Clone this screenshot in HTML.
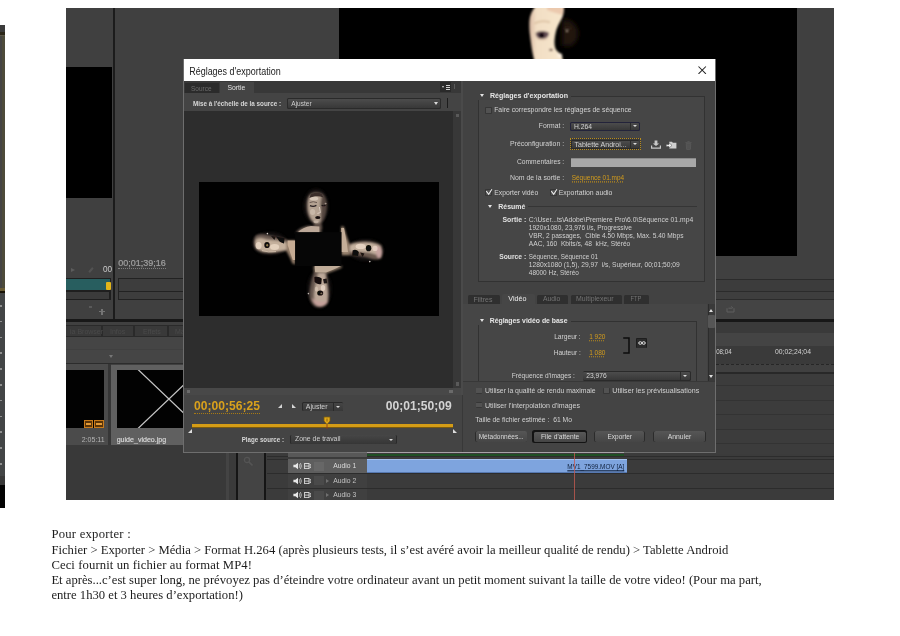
<!DOCTYPE html>
<html lang="fr">
<head>
<meta charset="utf-8">
<title>Réglages d'exportation</title>
<style>
html,body{margin:0;padding:0;background:#fff;}
body{width:900px;height:636px;position:relative;overflow:hidden;font-family:"Liberation Sans",sans-serif;}
.a{position:absolute;}
.t{position:absolute;white-space:nowrap;line-height:1;font-size:7px;color:#c8c8c8;}
#shot{position:absolute;left:0;top:0;width:900px;height:636px;background:#404040;clip-path:inset(8px 66px 136px 66px);filter:blur(0.35px);}
.cap{position:absolute;left:51.4px;font-family:"Liberation Serif",serif;font-size:12.66px;line-height:1;color:#1c1c1c;white-space:nowrap;}
</style>
</head>
<body>

<!-- left strip of neighbouring page -->
<div class="a" style="left:0;top:25px;width:5px;height:7px;background:#3b3b3b;"></div>
<div class="a" style="left:0;top:32px;width:5px;height:2.5px;background:#2b2618;"></div>
<div class="a" style="left:0;top:34.5px;width:5px;height:1.5px;background:#5c5848;"></div>
<div class="a" style="left:0;top:36px;width:2px;height:252px;background:#454443;"></div>
<div class="a" style="left:2px;top:36px;width:3px;height:252px;background:#4d4b3a;"></div>
<div class="a" style="left:0;top:288px;width:5px;height:3px;background:#6a5c34;"></div>
<div class="a" style="left:0;top:291px;width:5px;height:1.7px;background:#181206;"></div>
<div class="a" style="left:0;top:292.7px;width:5px;height:183px;background:#434546;"></div>
<div class="a" style="left:0;top:305px;width:2px;height:168px;background:repeating-linear-gradient(to bottom,#8e8e8e 0,#8e8e8e 1.6px,transparent 1.6px,transparent 15.8px);"></div>
<div class="a" style="left:0;top:475.7px;width:5px;height:9px;background:#393939;"></div>
<div class="a" style="left:0;top:484.7px;width:5px;height:23.8px;background:#030303;"></div>

<!-- screenshot -->
<div id="shot">

<!-- ===== background app (page coords) ===== -->
<!-- source monitor black -->
<div class="a" style="left:66px;top:67px;width:46px;height:131px;background:#000;"></div>
<div class="a" style="left:113px;top:8px;width:2px;height:312px;background:#1c1c1c;"></div>
<!-- program monitor -->
<div class="a" style="left:339px;top:8px;width:458px;height:248px;background:#000;"></div>
<svg class="a" style="left:500px;top:8px" width="120" height="51" viewBox="500 8 120 51">
<defs>
<filter id="fb1" x="-20%" y="-20%" width="140%" height="140%"><feGaussianBlur stdDeviation="0.8"/></filter>
<filter id="fb2" x="-30%" y="-30%" width="160%" height="160%"><feGaussianBlur stdDeviation="2.4"/></filter>
<linearGradient id="fg" x1="0" y1="0" x2="1" y2="0"><stop offset="0" stop-color="#d8b8a2"/><stop offset="0.2" stop-color="#f2dec4"/><stop offset="1" stop-color="#f6e6cc"/></linearGradient>
</defs>
<g filter="url(#fb2)">
<path d="M562 20 C570 18 577 24 578 32 C578.6 38 576 43 571 46 L562 46 Z" fill="#24150f"/>
</g>
<g filter="url(#fb1)">
<path d="M536.4 5 C532.4 10 529.6 15.6 529.4 21.2 C529.2 26 529.4 30.6 529.9 34.6 C530.4 39 531 43 531.6 47.2 C532.2 51.4 533.2 56 534.6 62 L563.2 62 L562.2 56.6 C561 53.6 558 52 556.2 50 C554.8 47.6 554.4 44.6 554.5 40.8 C554.7 37.6 555.2 34.6 555.8 31.9 C556.6 28.6 558 25.6 559.4 22.9 C561 20 562.6 17.6 563.2 14.6 C563.8 11.6 564 8 563.8 5 Z" fill="url(#fg)"/>
<path d="M547 6 L563.8 6 C564 9 563.6 12 563 15 C558 13.6 552 12 547 10 Z" fill="#e8c2a6" opacity=".8"/>
<path d="M534.6 23.4 Q541 19.8 550 22.2" stroke="#d8bc9c" stroke-width="1.7" fill="none"/>
<path d="M535.6 35 C537 32.4 541 31 545 32 C547 32.6 548.4 33.6 548.8 35 C548 37.6 545 39 541.6 39 C538.6 38.8 536.4 37.4 535.6 35 Z" fill="#6a525a"/>
<path d="M535.8 33.6 Q541.6 29.6 548.8 33.4" stroke="#4a343c" stroke-width="1.3" fill="none"/>
<ellipse cx="541.6" cy="35.2" rx="2.9" ry="2.5" fill="#0e0608"/>
<path d="M536.4 38.6 Q541.4 41.4 547.6 38.4" stroke="#e2c8ae" stroke-width="1.1" fill="none"/>
<ellipse cx="551" cy="49.9" rx="1.7" ry="1.2" fill="#5a3a30"/>
<ellipse cx="559.6" cy="55.4" rx="2.6" ry="2.2" fill="#fbeede"/>
<circle cx="567" cy="31" r="1.1" fill="#d8cab8"/>
<path d="M563.4 28.6 Q567.6 26.6 572 29" stroke="#3a2822" stroke-width="1.1" fill="none"/>
</g>
</svg>
<!-- left transport -->
<div class="t" style="left:102.9px;top:266.2px;font-size:8.2px;color:#cacaca;transform:scaleY(1.12);">00</div>
<div class="t" style="left:118.3px;top:259.10px;font-size:8.99px;color:#a0a0a0;-webkit-text-stroke:0.2px #a0a0a0;border-bottom:1px dotted #808080;padding-bottom:0.3px;">00;01;39;16</div>
<div class="a" style="left:71px;top:268px;width:0;height:0;border-left:4px solid #5c5c5c;border-top:2.5px solid transparent;border-bottom:2.5px solid transparent;"></div>
<div class="a" style="left:88px;top:267px;width:6px;height:6px;border-radius:1px;background:#525252;transform:rotate(40deg) scaleX(.35);"></div>
<div class="a" style="left:66px;top:278px;width:45px;height:22px;background:#1f1f1f;"></div>
<div class="a" style="left:66px;top:279px;width:44px;height:11px;background:#285e5f;"></div>
<div class="a" style="left:106px;top:282px;width:5px;height:8px;background:#e2b619;border-radius:1px;"></div>
<div class="a" style="left:66px;top:292px;width:43px;height:7px;background:#3b3b3b;"></div>
<div class="a" style="left:118px;top:278px;width:66px;height:22px;background:#222;"></div>
<div class="a" style="left:119px;top:279px;width:65px;height:12px;background:#3d3d3d;"></div>
<div class="a" style="left:119px;top:292px;width:65px;height:7px;background:#3d3d3d;"></div>
<div class="a" style="left:99px;top:311px;width:6px;height:1.4px;background:#747474;"></div>
<div class="a" style="left:101.3px;top:308.7px;width:1.4px;height:6px;background:#747474;"></div>
<div class="a" style="left:89px;top:306px;width:3px;height:2px;background:#5a5a5a;"></div>
<div class="a" style="left:66px;top:319px;width:118px;height:3px;background:#181818;"></div>
<!-- tabs row left -->
<div class="a" style="left:66px;top:325px;width:118px;height:12px;background:#2a2a2a;"></div>
<div class="a" style="left:66px;top:326px;width:35px;height:10px;background:#393939;"></div>
<div class="a" style="left:103px;top:326px;width:30px;height:10px;background:#393939;"></div>
<div class="a" style="left:135px;top:326px;width:32px;height:10px;background:#393939;"></div>
<div class="a" style="left:169px;top:326px;width:15px;height:10px;background:#393939;"></div>
<div class="t" style="left:70px;top:328px;font-size:7px;color:#4a4a4a;">ia Browser</div>
<div class="t" style="left:110px;top:328px;font-size:7px;color:#4a4a4a;">Infos</div>
<div class="t" style="left:143px;top:328px;font-size:7px;color:#4a4a4a;">Effets</div>
<div class="t" style="left:175px;top:328px;font-size:7px;color:#4a4a4a;">Ma</div>
<div class="a" style="left:66px;top:337px;width:118px;height:26px;background:#454545;"></div>
<div class="a" style="left:66px;top:349px;width:118px;height:1px;background:#404040;"></div>
<div class="a" style="left:109px;top:355px;width:0;height:0;border-top:3px solid #777;border-left:2px solid transparent;border-right:2px solid transparent;"></div>
<div class="a" style="left:66px;top:363px;width:118px;height:1px;background:#2c2c2c;"></div>
<!-- thumbs -->
<div class="a" style="left:66px;top:364px;width:42px;height:81px;background:#4b4b4b;"></div>
<div class="a" style="left:66px;top:370px;width:38px;height:58px;background:#020202;"></div>
<div class="a" style="left:84px;top:420px;width:9px;height:8px;box-sizing:border-box;border:1px solid #c97b1b;background:#5a3408;"></div>
<div class="a" style="left:94px;top:420px;width:10px;height:8px;box-sizing:border-box;border:1px solid #c97b1b;background:#5a3408;"></div>
<div class="a" style="left:86px;top:423px;width:5px;height:2px;background:#e39a36;"></div>
<div class="a" style="left:96px;top:423px;width:6px;height:2px;background:#e39a36;"></div>
<div class="a" style="left:108px;top:364px;width:3px;height:81px;background:#363636;"></div>
<div class="a" style="left:111px;top:365px;width:73px;height:80px;background:#606060;"></div>
<div class="a" style="left:117px;top:370px;width:67px;height:58px;background:#020202;overflow:hidden;">
<svg class="a" style="left:0;top:0" width="104" height="58" viewBox="0 0 104 58"><path d="M21 -0.5 L83 58.5 M83 -0.5 L21 58.5" stroke="#c4c4c4" stroke-width="1.25" fill="none"/></svg>
</div>
<div class="t" style="left:81.7px;top:435.88px;font-size:7.05px;color:#b4b4b4;transform:scaleY(1.12);">2:05:11</div>
<div class="t" style="left:116.7px;top:435.87px;font-size:7.07px;color:#dadada;transform:scaleY(1.12);-webkit-text-stroke:0.15px #dadada;">guide_video.jpg</div>
<!-- below thumbs -->
<div class="a" style="left:66px;top:445px;width:160px;height:55px;background:#393939;"></div>
<div class="a" style="left:226px;top:445px;width:3px;height:55px;background:#444;"></div>
<div class="a" style="left:229px;top:445px;width:7px;height:55px;background:#3a3a3a;"></div>
<div class="a" style="left:236px;top:445px;width:2px;height:55px;background:#151515;"></div>
<div class="a" style="left:238px;top:445px;width:26px;height:55px;background:#444;"></div>
<svg class="a" style="left:243px;top:456px" width="11" height="11" viewBox="0 0 11 11"><circle cx="4" cy="4" r="2.6" fill="none" stroke="#545454" stroke-width="1.3"/><path d="M6 6 L9.5 9.5" stroke="#545454" stroke-width="1.7"/></svg>
<div class="a" style="left:264px;top:445px;width:2px;height:55px;background:#151515;"></div>
<div class="a" style="left:266px;top:445px;width:22px;height:55px;background:#3b3b3b;"></div>
<div class="a" style="left:716px;top:279px;width:118px;height:1px;background:#2b2b2b;"></div>
<div class="a" style="left:716px;top:280px;width:118px;height:11px;background:#3c3c3c;"></div>
<div class="a" style="left:716px;top:291px;width:118px;height:1px;background:#2b2b2b;"></div>
<div class="a" style="left:716px;top:292px;width:118px;height:7px;background:#3e3e3e;"></div>
<div class="a" style="left:716px;top:299px;width:118px;height:1px;background:#2b2b2b;"></div>
<div class="a" style="left:716px;top:300px;width:118px;height:19px;background:#444;"></div>
<svg class="a" style="left:725.5px;top:304.5px" width="9" height="8" viewBox="0 0 9 8"><path d="M1 3.2 V7 H8 V3.2 M2.4 3.2 H6.2 M5.2 1.4 L7 3.2" stroke="#5e5e5e" stroke-width="1" fill="none"/></svg>
<div class="a" style="left:716px;top:319px;width:118px;height:3px;background:#171717;"></div>
<div class="a" style="left:716px;top:322px;width:118px;height:11px;background:#3a3a3a;"></div>
<div class="a" style="left:716px;top:333px;width:118px;height:13px;background:#444;"></div>
<div class="a" style="left:716px;top:346px;width:118px;height:18px;background:#3a3a3a;"></div>
<div class="t" style="left:716.2px;top:349.02px;font-size:6.15px;color:#d4d4d4;transform:scaleY(1.1);">08;04</div>
<div class="t" style="left:775px;top:348.69px;font-size:6.81px;color:#d4d4d4;transform:scaleY(1.1);">00;02;24;04</div>
<div class="a" style="left:716px;top:363.6px;width:118px;height:0;border-top:1px dashed #262626;"></div>
<div class="a" style="left:716px;top:365px;width:118px;height:7.5px;background:#404040;"></div>
<div class="a" style="left:716px;top:372.3px;width:118px;height:1.5px;background:#282828;"></div>
<div class="a" style="left:716px;top:373.8px;width:118px;height:126.2px;background:#3c3c3c;"></div>
<div class="a" style="left:716px;top:385px;width:118px;height:1px;background:#343434;"></div>
<div class="a" style="left:716px;top:399.5px;width:118px;height:1px;background:#343434;"></div>
<div class="a" style="left:716px;top:414px;width:118px;height:1px;background:#343434;"></div>
<div class="a" style="left:716px;top:428.7px;width:118px;height:1px;background:#343434;"></div>
<div class="a" style="left:716px;top:443.3px;width:118px;height:1px;background:#343434;"></div>
<div class="a" style="left:288px;top:445px;width:546px;height:55px;background:#3b3b3b;"></div>
<div class="a" style="left:716px;top:373.8px;width:118px;height:80px;background:#3c3c3c;"></div>
<div class="a" style="left:716px;top:385px;width:118px;height:1px;background:#333;"></div>
<div class="a" style="left:716px;top:399.5px;width:118px;height:1px;background:#333;"></div>
<div class="a" style="left:716px;top:414px;width:118px;height:1px;background:#333;"></div>
<div class="a" style="left:716px;top:428.7px;width:118px;height:1px;background:#333;"></div>
<div class="a" style="left:716px;top:443.3px;width:118px;height:1px;background:#333;"></div>
<div class="a" style="left:267px;top:455.8px;width:567px;height:1px;background:#2c2c2c;"></div>
<div class="a" style="left:267px;top:458.8px;width:567px;height:1px;background:#2c2c2c;"></div>
<div class="a" style="left:267px;top:473.4px;width:567px;height:1px;background:#2c2c2c;"></div>
<div class="a" style="left:267px;top:488px;width:567px;height:1px;background:#2c2c2c;"></div>
<div class="a" style="left:288.3px;top:452px;width:78.5px;height:4.6px;background:#585858;"></div>
<div class="a" style="left:367px;top:453.8px;width:256.5px;height:2.2px;background:#1f5024;"></div>
<div class="a" style="left:288.3px;top:459.4px;width:78.5px;height:13.8px;background:#5e5e5e;"></div>
<div class="a" style="left:288.3px;top:474.2px;width:78.5px;height:13.6px;background:#404040;"></div>
<div class="a" style="left:288.3px;top:488.8px;width:78.5px;height:12px;background:#404040;"></div>
<svg class="a" style="left:293px;top:462.3px" width="9" height="8" viewBox="0 0 9 8"><path d="M0.4 2.8 H2.4 L5 0.8 V7.2 L2.4 5.2 H0.4 Z" fill="#e8e8e8"/><path d="M6.2 2.2 Q7.6 4 6.2 5.8 M7.4 1 Q9.4 4 7.4 7" stroke="#e0e0e0" stroke-width="0.7" fill="none"/></svg>
<svg class="a" style="left:304.3px;top:463.2px" width="7.4" height="6.2" viewBox="0 0 8 7"><rect x="0.5" y="0.6" width="5" height="5.8" fill="none" stroke="#e6e6e6" stroke-width="1"/><path d="M1 3.5 H5.5" stroke="#e6e6e6" stroke-width="0.9"/><path d="M5.6 2.2 L7.6 1 V3.2 Z M5.6 4.6 L7.6 3.8 V6 Z" fill="#e6e6e6"/></svg>
<div class="a" style="left:313.5px;top:461.7px;width:10px;height:9.2px;background:#676767;"></div>
<div class="t" style="left:333.3px;top:463.41px;font-size:6.78px;color:#dcdcdc;transform:scaleY(1.1);">Audio 1</div>
<svg class="a" style="left:293px;top:476.9px" width="9" height="8" viewBox="0 0 9 8"><path d="M0.4 2.8 H2.4 L5 0.8 V7.2 L2.4 5.2 H0.4 Z" fill="#e8e8e8"/><path d="M6.2 2.2 Q7.6 4 6.2 5.8 M7.4 1 Q9.4 4 7.4 7" stroke="#e0e0e0" stroke-width="0.7" fill="none"/></svg>
<svg class="a" style="left:304.3px;top:477.8px" width="7.4" height="6.2" viewBox="0 0 8 7"><rect x="0.5" y="0.6" width="5" height="5.8" fill="none" stroke="#e6e6e6" stroke-width="1"/><path d="M1 3.5 H5.5" stroke="#e6e6e6" stroke-width="0.9"/><path d="M5.6 2.2 L7.6 1 V3.2 Z M5.6 4.6 L7.6 3.8 V6 Z" fill="#e6e6e6"/></svg>
<div class="a" style="left:313.5px;top:476.29999999999995px;width:10px;height:9.2px;background:#4a4a4a;"></div>
<div class="a" style="left:325.6px;top:478.7px;width:0;height:0;border-left:3px solid #707070;border-top:2.2px solid transparent;border-bottom:2.2px solid transparent;"></div>
<div class="t" style="left:333.3px;top:478.01px;font-size:6.78px;color:#c4c4c4;transform:scaleY(1.1);">Audio 2</div>
<svg class="a" style="left:293px;top:491.3px" width="9" height="8" viewBox="0 0 9 8"><path d="M0.4 2.8 H2.4 L5 0.8 V7.2 L2.4 5.2 H0.4 Z" fill="#e8e8e8"/><path d="M6.2 2.2 Q7.6 4 6.2 5.8 M7.4 1 Q9.4 4 7.4 7" stroke="#e0e0e0" stroke-width="0.7" fill="none"/></svg>
<svg class="a" style="left:304.3px;top:492.2px" width="7.4" height="6.2" viewBox="0 0 8 7"><rect x="0.5" y="0.6" width="5" height="5.8" fill="none" stroke="#e6e6e6" stroke-width="1"/><path d="M1 3.5 H5.5" stroke="#e6e6e6" stroke-width="0.9"/><path d="M5.6 2.2 L7.6 1 V3.2 Z M5.6 4.6 L7.6 3.8 V6 Z" fill="#e6e6e6"/></svg>
<div class="a" style="left:313.5px;top:490.7px;width:10px;height:9.2px;background:#4a4a4a;"></div>
<div class="a" style="left:325.6px;top:493.1px;width:0;height:0;border-left:3px solid #707070;border-top:2.2px solid transparent;border-bottom:2.2px solid transparent;"></div>
<div class="t" style="left:333.3px;top:492.41px;font-size:6.78px;color:#c4c4c4;transform:scaleY(1.1);">Audio 3</div>
<div class="a" style="left:367px;top:459.4px;width:260px;height:13.8px;background:#7ea4de;"></div>
<div class="a" style="left:367px;top:459.4px;width:260px;height:1px;background:#a4c2ee;"></div>
<div class="a" style="left:367px;top:472.4px;width:260px;height:0.8px;background:#5678b0;"></div>
<div class="t" style="left:567.3px;top:463.50px;font-size:6.41px;color:#10203c;transform:scaleY(1.1);text-decoration:underline;text-decoration-thickness:0.6px;text-underline-offset:0.6px;">MV1_7599.MOV [A]</div>
<div class="a" style="left:574px;top:452px;width:0.9px;height:48px;background:#c25a50;opacity:.8;"></div>


<!--DLG_START-->
<div class="a" style="left:183px;top:59px;width:533px;height:393.5px;background:#6e6e6e;"></div>
<div class="a" style="left:367px;top:451.7px;width:256.5px;height:1.1px;background:#a8a2a8;"></div>
<div class="a" style="left:184px;top:59px;width:531px;height:22px;background:#ffffff;"></div>
<div class="a" style="left:184px;top:81px;width:531px;height:370.5px;background:#444444;"></div>
<svg class="a" style="left:698.4px;top:66px" width="8.4" height="8.4" viewBox="0 0 8.4 8.4"><path d="M0.5 0.5 L7.9 7.9 M7.9 0.5 L0.5 7.9" stroke="#262626" stroke-width="1.05" fill="none"/></svg>
<div class="a" style="left:184px;top:81px;width:277.5px;height:12.3px;background:#383838;"></div>
<div class="a" style="left:185px;top:82.5px;width:34px;height:10.8px;background:#2b2b2b;"></div>
<div class="a" style="left:220px;top:82px;width:33.5px;height:11.3px;background:#444444;"></div>
<div class="a" style="left:440px;top:82.4px;width:11px;height:9.6px;background:#2a2a2a;"></div>
<div class="a" style="left:441.6px;top:86.2px;width:0;height:0;border-top:2.2px solid #d0d0d0;border-left:1.6px solid transparent;border-right:1.6px solid transparent;"></div>
<div class="a" style="left:446px;top:85.4px;width:4px;height:0.9px;background:#cfcfcf;"></div>
<div class="a" style="left:446px;top:87px;width:4px;height:0.9px;background:#cfcfcf;"></div>
<div class="a" style="left:446px;top:88.6px;width:4px;height:0.9px;background:#cfcfcf;"></div>
<div class="a" style="left:454.3px;top:84px;width:0.9px;height:4.5px;background:#5a5a5a;"></div>
<div class="a" style="left:184px;top:93.3px;width:277.5px;height:17.4px;background:#444444;"></div>
<div class="a" style="left:287px;top:98px;width:153.5px;height:10.6px;background:#2a2a2a;border-radius:1.5px;"></div>
<div class="a" style="left:287.7px;top:98.7px;width:152px;height:9.2px;background:;background:linear-gradient(#4c4c4c,#383838);border-radius:1px;"></div>
<div class="a" style="left:433.5px;top:102.3px;width:0;height:0;border-top:3px solid #d8d8d8;border-left:2.4px solid transparent;border-right:2.4px solid transparent;"></div>
<div class="a" style="left:447px;top:97.5px;width:1.2px;height:10px;background:#1c1c1c;"></div>
<div class="a" style="left:184px;top:110.7px;width:269.3px;height:277px;background:#2d2d2d;"></div>
<div class="a" style="left:453.3px;top:110.7px;width:8.2px;height:277px;background:#383838;"></div>
<div class="a" style="left:455.5px;top:113.5px;width:3.5px;height:3.5px;background:#5a5a5a;"></div>
<div class="a" style="left:455.5px;top:382px;width:3.5px;height:3.5px;background:#5a5a5a;"></div>
<div class="a" style="left:184px;top:387.7px;width:277.5px;height:7px;background:#484848;"></div>
<div class="a" style="left:186.5px;top:389.5px;width:3.5px;height:3.5px;background:#6a6a6a;"></div>
<div class="a" style="left:449px;top:389.5px;width:3.5px;height:3.5px;background:#6a6a6a;"></div>
<svg class="a" style="left:199px;top:182px" width="240" height="134" viewBox="199 182 240 134">
<defs>
<filter id="b1" x="-20%" y="-20%" width="140%" height="140%"><feGaussianBlur stdDeviation="0.85"/></filter>
<filter id="b2" x="-20%" y="-20%" width="140%" height="140%"><feGaussianBlur stdDeviation="0.6"/></filter>
<filter id="b3" x="-30%" y="-30%" width="160%" height="160%"><feGaussianBlur stdDeviation="1.6"/></filter>
</defs>
<rect x="199" y="182" width="240" height="134" fill="#010101"/>
<!-- faint glow / hair -->
<g filter="url(#b3)" opacity=".55">
<ellipse cx="316" cy="206" rx="12" ry="17" fill="#2a2220"/>
<ellipse cx="270" cy="243.6" rx="17" ry="11" fill="#2a2220"/>
<ellipse cx="366" cy="250" rx="17" ry="10.6" fill="#2a2220"/>
<ellipse cx="319.4" cy="289" rx="11.6" ry="19" fill="#2a2220"/>
</g>
<g filter="url(#b1)">
<!-- ===== top figure ===== -->
<path d="M311 193.4 C307.6 195.6 306.4 200.6 306.6 207.6 C306.8 213.6 309 219.6 313.6 223.6 C316.6 225.6 320.6 225 322.8 221.6 C325.4 217.6 326.8 211.6 326.8 205.6 C326.8 199.6 325 195.4 322 193.6 C318.4 191.8 314 191.8 311 193.4 Z" fill="#54463f"/>
<path d="M310.8 195 C308.4 197 307.6 201 307.8 207 C308 213 310 218.6 314 222.2 C316.6 224 319.4 223.8 320.6 221 L320.6 213.6 C321.4 210 320.2 207 320.6 203 C321 199 322 196.6 321.4 195 C318.4 193.4 313.6 193.4 310.8 195 Z" fill="#b4a292"/>
<path d="M314 223.4 L321.6 222.4 L322.4 229.6 L313 229 Z" fill="#5a4c44"/>
<path d="M295.6 233 C298 228.8 303.6 226.6 309.6 225.8 L320.6 227 L321.6 233 Z" fill="#6e5e54"/>
<path d="M341.2 226.2 L343.8 226.4 C345.4 232 347.6 240 350 244.4 L349.8 255.2 L341.4 255.2 Z" fill="#9a8470"/>
<!-- ===== left figure ===== -->
<path d="M255 236.4 C258 233.6 264 234 270 235.8 C276 237 282 238 287.4 240 L288 250.6 C283 251.4 278 252.8 272 253.2 C265 253.4 258 252.4 255 248.2 C253.4 244 253.4 239.6 255 236.4 Z" fill="#6c5c52"/>
<path d="M255.8 240 C258 237.6 262 238 266 239.6 C271 240.2 277 240.4 283 241.4 L286.6 243 L287 249.6 C283 250.4 278 251.6 272 252 C265.6 252.2 259.4 251.2 256.4 247.6 C255 245 255 242.4 255.8 240 Z" fill="#c4b09c"/>
<path d="M286.4 240.2 L295.4 240.2 L295.4 264.4 L292.4 263.4 C290.2 258 288 254 286.4 251 Z" fill="#927c68"/>
<!-- ===== right figure ===== -->
<path d="M349.2 244 C354 241.8 360 241 366 241.2 C372 241.4 378 242.8 381.4 245.2 C383 249 383 254 381.4 258.2 C378 260.2 374 259.6 370 258.2 C364 256.2 358 255.6 352 255.2 L349 255.2 Z" fill="#6c5a50"/>
<path d="M350 245.4 C354 243.2 360 242.4 366 242.6 C372 242.8 377 244 380 246 C381.4 249 381.6 252 380.6 255.4 C377 255 373 253.6 369 252.6 C363 251.4 357 251.6 352 251.8 L349.6 251.6 Z" fill="#c4b09e"/>
<path d="M376 246 C380 246.4 382 249 382 252 C382 255 381 257.6 379 258.6 C376.6 257 375.6 253 375.6 250 Z" fill="#c8a4a0"/>
<!-- ===== bottom figure ===== -->
<path d="M313.4 266 L342.6 266 L341 268.2 C336 270.2 330 272.2 326.6 273.8 L314 273.2 Z" fill="#82705f"/>
<path d="M314.2 272 C312.2 278 310.6 284 309.6 292 C309 299 311 304.2 316 306.8 C320 307.8 325 306.8 327.8 303.2 C329.8 298 329 290 328 284 C327.4 279 326.8 275 326.4 272 Z" fill="#68584f"/>
<path d="M318 273 C317 278 315.6 284 314.6 290 C313.6 296 314 301 317 304.4 C320 306 324.6 305.4 326.6 302.4 C328.2 298 327.6 291 326.8 285 C326.2 280 325.6 276 325.2 273 Z" fill="#bca898"/>
<path d="M312 298 C313 303 316 306 320 306.6 C324 306.4 327 304 328 300 C324 302.6 316 302 312 298 Z" fill="#c4a09a"/>
</g>
<g filter="url(#b2)">
<path d="M297 233 C300.6 229 306 226.6 311 226 L319.4 226.6 L319.4 233 Z" fill="#bca898"/>
<path d="M341.2 228 L344 228 C345.4 236 347 243 348 252 L341.4 252 Z" fill="#c4ae98"/>
<path d="M287.6 240.4 L295.4 240.4 L295.4 260 L292.8 260 C290.6 254 288.8 248 287.6 245 Z" fill="#c6ac94"/>
<path d="M314.6 266 L341 266 C335.6 269 329.8 271 326 272.4 L315.2 272.2 Z" fill="#c0ac98"/>
<!-- top face features: closed eyes, brows, nose, mouth -->
<path d="M310 205.6 Q313.2 207.2 316.4 205.4" stroke="#2a2022" stroke-width="1.3" fill="none"/>
<path d="M309.6 202.6 Q313.2 200.8 317 202.6" stroke="#6a5a52" stroke-width="1" fill="none"/>
<path d="M321.6 205.2 Q323.6 206.4 325.6 205" stroke="#1e1618" stroke-width="1.1" fill="none"/>
<ellipse cx="325.6" cy="203.6" rx="1" ry="0.8" fill="#a4968c"/>
<ellipse cx="317.8" cy="217.4" rx="2.6" ry="1.5" fill="#160d10"/>
<path d="M319.4 207 L320.4 212.6 L317.4 213.4" stroke="#e8dace" stroke-width="1" fill="none" opacity=".8"/>
<ellipse cx="314" cy="198.4" rx="4.2" ry="2" fill="#dccdbf" opacity=".8"/>
<ellipse cx="312.6" cy="212" rx="2.6" ry="3" fill="#d6c6b8" opacity=".6"/>
<ellipse cx="316" cy="221.8" rx="2.6" ry="1.4" fill="#cdbcae" opacity=".7"/>
<path d="M310.6 194.4 C313.6 192.4 319 192.4 322 194 L323.4 197.4 C319 195.6 313.6 195.8 309.4 198 Z" fill="#3a2e2a"/>
<!-- left face features -->
<ellipse cx="267" cy="245" rx="2.7" ry="3.1" fill="#100a07"/>
<ellipse cx="267.2" cy="245.3" rx="1" ry="1.2" fill="#8a784c"/>
<path d="M276 236.4 L284.6 238.2 L284 243.4 C281 243 279 241.6 278.2 239.6 Z" fill="#100a08"/>
<path d="M271 236 L275.6 236.6 L274.4 240 Z" fill="#1a120f"/>
<ellipse cx="258.6" cy="245.6" rx="3" ry="3.6" fill="#ead8c6" opacity=".85"/>
<ellipse cx="274.6" cy="247" rx="4.6" ry="3" fill="#ecdac6" opacity=".8"/>
<path d="M262 250.6 Q268 252.6 276 251.6" stroke="#e0ccb8" stroke-width="1" fill="none" opacity=".7"/>
<circle cx="267.4" cy="233.6" r="0.8" fill="#d6cec8"/>
<!-- right face features -->
<ellipse cx="368.6" cy="248.2" rx="2.7" ry="3.1" fill="#100a07"/>
<path d="M352.6 250.4 C355 249.2 358 250 358.8 252.4 L358 256 L352.2 255.6 Z" fill="#100a08"/>
<path d="M360.2 252.6 L364.4 253.6 L362.6 257 Z" fill="#1a120f"/>
<ellipse cx="360.6" cy="246.4" rx="5" ry="2.6" fill="#ecdac8" opacity=".8"/>
<ellipse cx="375" cy="248.4" rx="2.6" ry="2.6" fill="#ecd6ca" opacity=".75"/>
<circle cx="369.8" cy="261.6" r="0.8" fill="#d6cec8"/>
<!-- bottom face features -->
<ellipse cx="320.2" cy="293" rx="3" ry="2.6" fill="#100a07"/>
<ellipse cx="321.4" cy="293.4" rx="1" ry="0.9" fill="#806e5a"/>
<path d="M314.4 277 C317 276.2 320.4 276.8 321.8 278.8 L321.2 284 C318.6 284.6 316 283.8 314.6 281.8 Z" fill="#120c0a"/>
<path d="M323 279.2 L326.6 278.6 L327.2 283.2 L324 283.6 Z" fill="#1e1512"/>
<ellipse cx="323" cy="288" rx="2.2" ry="3" fill="#ead8c8" opacity=".8"/>
<ellipse cx="316.4" cy="289" rx="1.6" ry="2.6" fill="#e0cebc" opacity=".6"/>
<circle cx="308.4" cy="293.6" r="0.8" fill="#c0b8b2"/>
</g>
<!-- central black card -->
<rect x="295.1" y="232.1" width="46.4" height="33.9" fill="#060606"/>
</svg>

<div class="a" style="left:184px;top:394.7px;width:277.5px;height:57px;background:#444444;"></div>
<div class="a" style="left:278.3px;top:404px;width:0;height:0;border-bottom:4.6px solid #d4d4d4;border-left:4.6px solid transparent;"></div>
<div class="a" style="left:291.6px;top:404px;width:0;height:0;border-bottom:4.6px solid #d4d4d4;border-right:4.6px solid transparent;"></div>
<div class="a" style="left:302px;top:402px;width:41.3px;height:9.3px;background:#2a2a2a;border-radius:1.5px;"></div>
<div class="a" style="left:302.7px;top:402.7px;width:39.9px;height:7.9px;background:;background:linear-gradient(#454545,#383838);border-radius:1px;"></div>
<div class="a" style="left:332.6px;top:402.7px;width:0.8px;height:7.9px;background:#2a2a2a;"></div>
<div class="a" style="left:335.9px;top:405.6px;width:0;height:0;border-top:2.8px solid #d8d8d8;border-left:2.2px solid transparent;border-right:2.2px solid transparent;"></div>
<div class="a" style="left:192.3px;top:423.6px;width:260.79999999999995px;height:4px;background:#7a5a10;"></div>
<div class="a" style="left:192.3px;top:424px;width:260.4px;height:3px;background:#d49c16;"></div>
<svg class="a" style="left:322.5px;top:415.5px" width="8" height="13" viewBox="0 0 8 13"><path d="M1 1 H7 V5 L4 8.5 L1 5 Z" fill="#e0a818" stroke="#7a5a10" stroke-width="0.8"/><path d="M4 8.5 V13" stroke="#8a3a1c" stroke-width="0.9"/><path d="M4 2.5 V5.5" stroke="#7a5a10" stroke-width="0.9"/></svg>
<div class="a" style="left:187.5px;top:429px;width:0;height:0;border-bottom:4px solid #dcdcdc;border-left:4px solid transparent;"></div>
<div class="a" style="left:452.5px;top:429px;width:0;height:0;border-bottom:4px solid #dcdcdc;border-right:4px solid transparent;"></div>
<div class="a" style="left:290.3px;top:434.7px;width:106.7px;height:9.8px;background:#2a2a2a;border-radius:1.5px;"></div>
<div class="a" style="left:291px;top:435.4px;width:105.3px;height:8.4px;background:;background:linear-gradient(#464646,#363636);border-radius:1px;"></div>
<div class="a" style="left:389px;top:438.6px;width:0;height:0;border-top:2.8px solid #d8d8d8;border-left:2.2px solid transparent;border-right:2.2px solid transparent;"></div>
<div class="a" style="left:460.9px;top:81px;width:2.7px;height:313.7px;background:#4a4a4a;"></div>
<div class="a" style="left:462.3px;top:394.7px;width:1px;height:57px;background:#383838;"></div>
<div class="a" style="left:463.3px;top:81px;width:251.7px;height:370.5px;background:#424242;"></div>
<div class="a" style="left:477.5px;top:95.5px;width:227px;height:186.5px;background:#323232;"></div>
<div class="a" style="left:478.5px;top:96.5px;width:225px;height:184.5px;background:#464646;"></div>
<div class="a" style="left:477.5px;top:91px;width:93px;height:9px;background:#424242;"></div>
<div class="a" style="left:479.6px;top:94px;width:0;height:0;border-top:3.6px solid #e4e4e4;border-left:2.4px solid transparent;border-right:2.4px solid transparent;"></div>
<div class="a" style="left:485px;top:107.3px;width:6.8px;height:6.4px;background:#363636;border-radius:1px;"></div>
<div class="a" style="left:485.8px;top:108.1px;width:5.2px;height:4.8px;background:#525252;"></div>
<div class="a" style="left:570px;top:122px;width:70.3px;height:9px;background:#23233a;border-radius:1.5px;"></div>
<div class="a" style="left:570.8px;top:122.8px;width:68.7px;height:7.4px;background:;background:linear-gradient(#4c4c4c,#383838);border-radius:1px;"></div>
<div class="a" style="left:629.5px;top:122.8px;width:0.8px;height:7.4px;background:#2c2c2c;"></div>
<div class="a" style="left:632.7px;top:125.3px;width:0;height:0;border-top:2.9px solid #dcdcdc;border-left:2.3px solid transparent;border-right:2.3px solid transparent;"></div>
<div class="a" style="left:569.6px;top:138px;width:71.4px;height:12.3px;background:;border:1px dotted #b88c1e;box-sizing:border-box;background:#3a3a3a;"></div>
<div class="a" style="left:571.2px;top:139.7px;width:68.2px;height:9px;background:#2a2a2a;border-radius:1.5px;"></div>
<div class="a" style="left:572.0px;top:140.5px;width:66.60000000000001px;height:7.4px;background:;background:linear-gradient(#4c4c4c,#383838);border-radius:1px;"></div>
<div class="a" style="left:629.5px;top:140.5px;width:0.8px;height:7.4px;background:#2c2c2c;"></div>
<div class="a" style="left:633.2px;top:143.0px;width:0;height:0;border-top:2.9px solid #dcdcdc;border-left:2.3px solid transparent;border-right:2.3px solid transparent;"></div>
<svg class="a" style="left:650.5px;top:139.5px" width="10" height="9" viewBox="0 0 10 9"><path d="M3.6 0.4 H6.4 V3.4 H8.2 L5 6 L1.8 3.4 H3.6 Z" fill="#c8c8c8"/><path d="M0.6 5.6 V8.2 H9.4 V5.6" stroke="#c8c8c8" stroke-width="1.2" fill="none"/></svg>
<svg class="a" style="left:666px;top:140.5px" width="11" height="8" viewBox="0 0 11 8"><path d="M3.2 0.8 H6 L6.8 1.8 H10.4 V7.6 H3.2 Z" fill="#cfcfcf"/><path d="M0.2 3.4 H3 V1.8 L6 4.4 L3 7 V5.4 H0.2 Z" fill="#f4f4f4" stroke="#444" stroke-width="0.5"/></svg>
<svg class="a" style="left:685px;top:140.5px" width="7" height="9" viewBox="0 0 7 9"><path d="M0.4 1.6 H6.6 M2.4 0.6 H4.6 M1.2 2.6 L1.6 8.4 H5.4 L5.8 2.6 Z" stroke="#585858" stroke-width="0.9" fill="#525252"/></svg>
<div class="a" style="left:571.2px;top:158px;width:125.2px;height:9px;background:#a8a8a8;"></div>
<div class="a" style="left:571.2px;top:158px;width:125.2px;height:0.8px;background:#8a8a8a;"></div>
<div class="a" style="left:485px;top:189.2px;width:6.8px;height:6.4px;background:#363636;border-radius:1px;"></div>
<div class="a" style="left:485.8px;top:190.0px;width:5.2px;height:4.8px;background:#525252;"></div>
<svg class="a" style="left:484.5px;top:186.7px" width="10" height="10" viewBox="0 0 10 10"><path d="M1.3 4.1 L3.7 7.4 L6.9 2.3" stroke="#ececec" stroke-width="1.05" fill="none"/></svg>
<div class="a" style="left:550.2px;top:189.2px;width:6.8px;height:6.4px;background:#363636;border-radius:1px;"></div>
<div class="a" style="left:551.0px;top:190.0px;width:5.2px;height:4.8px;background:#525252;"></div>
<svg class="a" style="left:549.7px;top:186.7px" width="10" height="10" viewBox="0 0 10 10"><path d="M1.3 4.1 L3.7 7.4 L6.9 2.3" stroke="#ececec" stroke-width="1.05" fill="none"/></svg>
<div class="a" style="left:488.4px;top:205.3px;width:0;height:0;border-top:3.6px solid #e4e4e4;border-left:2.4px solid transparent;border-right:2.4px solid transparent;"></div>
<div class="a" style="left:528px;top:206.3px;width:169px;height:0.8px;background:#353535;"></div>
<div class="a" style="left:467.5px;top:294.8px;width:32.5px;height:9px;background:#2f2f2f;border-radius:1.5px 1.5px 0 0;"></div>
<div class="a" style="left:501.7px;top:294.3px;width:33.30000000000001px;height:10px;background:#464646;border-radius:1.5px 1.5px 0 0;"></div>
<div class="a" style="left:536.7px;top:294.8px;width:31.09999999999991px;height:9px;background:#2f2f2f;border-radius:1.5px 1.5px 0 0;"></div>
<div class="a" style="left:570.8px;top:294.8px;width:50.90000000000009px;height:9px;background:#2f2f2f;border-radius:1.5px 1.5px 0 0;"></div>
<div class="a" style="left:624.3px;top:294.8px;width:25.0px;height:9px;background:#2f2f2f;border-radius:1.5px 1.5px 0 0;"></div>
<div class="a" style="left:463.3px;top:303.8px;width:244.2px;height:77.4px;background:#464646;"></div>
<div class="a" style="left:707.5px;top:303.8px;width:7.5px;height:77.4px;background:#3a3a3a;"></div>
<div class="a" style="left:707.5px;top:303.8px;width:0.8px;height:77.4px;background:#2c2c2c;"></div>
<div class="a" style="left:708.4px;top:315px;width:6.2px;height:13.4px;background:#565656;border-radius:1px;"></div>
<div class="a" style="left:709.3px;top:308.5px;width:0;height:0;border-bottom:3px solid #e0e0e0;border-left:2.2px solid transparent;border-right:2.2px solid transparent;"></div>
<div class="a" style="left:709.3px;top:374.5px;width:0;height:0;border-top:3px solid #e0e0e0;border-left:2.2px solid transparent;border-right:2.2px solid transparent;"></div>
<div class="a" style="left:477.5px;top:321px;width:219.8px;height:60.2px;background:#323232;"></div>
<div class="a" style="left:478.5px;top:322px;width:217.8px;height:59.2px;background:#464646;"></div>
<div class="a" style="left:477.5px;top:316px;width:93px;height:9px;background:#464646;"></div>
<div class="a" style="left:479.6px;top:319px;width:0;height:0;border-top:3.6px solid #e4e4e4;border-left:2.4px solid transparent;border-right:2.4px solid transparent;"></div>
<svg class="a" style="left:622px;top:336.5px" width="9" height="17" viewBox="0 0 9 17"><path d="M1.2 1 H7 V16 H1.2" stroke="#0c0c0c" stroke-width="1.5" fill="none"/></svg>
<div class="a" style="left:636px;top:338.2px;width:10.8px;height:10.2px;background:#1e1e1e;border-radius:1px;"></div>
<div class="a" style="left:636.8px;top:339px;width:9.2px;height:8.6px;background:#2b2b2b;"></div>
<svg class="a" style="left:637.6px;top:341.3px" width="8" height="4" viewBox="0 0 8 4"><ellipse cx="2.3" cy="2" rx="1.6" ry="1.3" fill="none" stroke="#f0f0f0" stroke-width="0.9"/><ellipse cx="5.7" cy="2" rx="1.6" ry="1.3" fill="none" stroke="#f0f0f0" stroke-width="0.9"/></svg>
<div class="a" style="left:582.5px;top:370.8px;width:108.3px;height:10px;background:#2a2a2a;border-radius:1.5px;"></div>
<div class="a" style="left:583.3px;top:371.6px;width:106.7px;height:8.4px;background:;background:linear-gradient(#4c4c4c,#383838);border-radius:1px;"></div>
<div class="a" style="left:679.5px;top:371.6px;width:0.8px;height:8.4px;background:#2c2c2c;"></div>
<div class="a" style="left:682.7px;top:374.6px;width:0;height:0;border-top:2.9px solid #dcdcdc;border-left:2.3px solid transparent;border-right:2.3px solid transparent;"></div>
<div class="a" style="left:463.3px;top:381.2px;width:251.7px;height:70.3px;background:#444444;"></div>
<div class="a" style="left:463.3px;top:381.2px;width:251.7px;height:0.8px;background:#383838;"></div>
<div class="a" style="left:475.6px;top:387.5px;width:6.8px;height:6.4px;background:#363636;border-radius:1px;"></div>
<div class="a" style="left:476.40000000000003px;top:388.3px;width:5.2px;height:4.8px;background:#525252;"></div>
<div class="a" style="left:603.3px;top:387.5px;width:6.8px;height:6.4px;background:#363636;border-radius:1px;"></div>
<div class="a" style="left:604.0999999999999px;top:388.3px;width:5.2px;height:4.8px;background:#525252;"></div>
<div class="a" style="left:475.6px;top:401.8px;width:6.8px;height:6.4px;background:#363636;border-radius:1px;"></div>
<div class="a" style="left:476.40000000000003px;top:402.6px;width:5.2px;height:4.8px;background:#525252;"></div>
<div class="a" style="left:475.3px;top:430.6px;width:52.19999999999999px;height:11.8px;background:#2b2b2b;border-radius:2.5px;"></div>
<div class="a" style="left:476.1px;top:431.40000000000003px;width:50.59999999999999px;height:10.200000000000001px;background:;background:linear-gradient(#565656,#464646);border-radius:1.8px;"></div>
<div class="a" style="left:532.4px;top:430.0px;width:54.90000000000005px;height:13.0px;background:#141414;border-radius:2.5px;"></div>
<div class="a" style="left:533.9px;top:431.5px;width:51.90000000000005px;height:10.0px;background:;background:linear-gradient(#585858,#454545);border-radius:1.5px;"></div>
<div class="a" style="left:594px;top:430.6px;width:51px;height:11.8px;background:#2b2b2b;border-radius:2.5px;"></div>
<div class="a" style="left:594.8px;top:431.40000000000003px;width:49.4px;height:10.200000000000001px;background:;background:linear-gradient(#565656,#464646);border-radius:1.8px;"></div>
<div class="a" style="left:653.3px;top:430.6px;width:52.40000000000009px;height:11.8px;background:#2b2b2b;border-radius:2.5px;"></div>
<div class="a" style="left:654.0999999999999px;top:431.40000000000003px;width:50.80000000000009px;height:10.200000000000001px;background:;background:linear-gradient(#565656,#464646);border-radius:1.8px;"></div>
<div class="t" style="left:189.2px;top:67.61px;font-size:8.98px;color:#222;transform:scaleY(1.16);">Réglages d'exportation</div>
<div class="t" style="left:191px;top:85.67px;font-size:6.47px;color:#6c6c6c;transform:scaleY(1.1);">Source</div>
<div class="t" style="left:227.5px;top:85.49px;font-size:6.81px;color:#e0e0e0;transform:scaleY(1.1);">Sortie</div>
<div class="t" style="left:193px;top:100.64px;font-size:6.32px;color:#d6d6d6;font-weight:bold;transform:scaleY(1.1);">Mise à l'échelle de la source :</div>
<div class="t" style="left:291.3px;top:100.62px;font-size:6.55px;color:#d0d0d0;transform:scaleY(1.1);">Ajuster</div>
<div class="t" style="left:194px;top:400.44px;font-size:12.11px;color:#d9a11c;font-weight:bold;border-bottom:1px dotted #a87a14;padding-bottom:0.5px;">00;00;56;25</div>
<div class="t" style="left:385.7px;top:400.44px;font-size:12.11px;color:#d4d4d4;font-weight:bold;">00;01;50;09</div>
<div class="t" style="left:305.8px;top:403.40px;font-size:7.00px;color:#d0d0d0;transform:scaleY(1.1);">Ajuster</div>
<div class="t" style="left:241.7px;top:436.61px;font-size:6.19px;color:#d6d6d6;font-weight:bold;transform:scaleY(1.1);">Plage source :</div>
<div class="t" style="left:295px;top:436.25px;font-size:6.89px;color:#d0d0d0;transform:scaleY(1.1);">Zone de travail</div>
<div class="t" style="left:490px;top:92.86px;font-size:7.08px;color:#e6e6e6;font-weight:bold;transform:scaleY(1.1);">Réglages d'exportation</div>
<div class="t" style="left:494.2px;top:107.48px;font-size:6.83px;color:#d2d2d2;transform:scaleY(1.1);">Faire correspondre les réglages de séquence</div>
<div class="t" style="left:538.8px;top:122.99px;font-size:6.82px;color:#d2d2d2;transform:scaleY(1.1);">Format :</div>
<div class="t" style="left:574px;top:123.83px;font-size:6.74px;color:#d4d4d4;transform:scaleY(1.1);">H.264</div>
<div class="t" style="left:510px;top:140.84px;font-size:6.91px;color:#d2d2d2;transform:scaleY(1.1);">Préconfiguration :</div>
<div class="t" style="left:574.5px;top:141.40px;font-size:7.01px;color:#d4d4d4;transform:scaleY(1.1);">Tablette Androi...</div>
<div class="t" style="left:517px;top:159.26px;font-size:6.69px;color:#d2d2d2;transform:scaleY(1.1);">Commentaires :</div>
<div class="t" style="left:510px;top:175.14px;font-size:6.92px;color:#d2d2d2;transform:scaleY(1.1);">Nom de la sortie :</div>
<div class="t" style="left:571.7px;top:175.37px;font-size:6.47px;color:#d39c1c;transform:scaleY(1.1);text-decoration:underline dotted #b98a1c;text-decoration-thickness:0.7px;text-underline-offset:1.1px;">Séquence 01.mp4</div>
<div class="t" style="left:494.2px;top:189.68px;font-size:6.84px;color:#d2d2d2;transform:scaleY(1.1);">Exporter vidéo</div>
<div class="t" style="left:558.7px;top:189.64px;font-size:6.91px;color:#d2d2d2;transform:scaleY(1.1);">Exportation audio</div>
<div class="t" style="left:498.3px;top:204.23px;font-size:6.94px;color:#e6e6e6;font-weight:bold;transform:scaleY(1.1);">Résumé</div>
<div class="t" style="left:502.5px;top:216.56px;font-size:6.88px;color:#e0e0e0;font-weight:bold;transform:scaleY(1.1);">Sortie :</div>
<div class="t" style="left:499.2px;top:253.53px;font-size:6.75px;color:#e0e0e0;font-weight:bold;transform:scaleY(1.1);">Source :</div>
<div class="t" style="left:528.8px;top:216.62px;font-size:6.76px;color:#d0d0d0;transform:scaleY(1.1);">C:\User...ts\Adobe\Premiere Pro\6.0\Séquence 01.mp4</div>
<div class="t" style="left:528.8px;top:225.01px;font-size:6.58px;color:#d0d0d0;transform:scaleY(1.1);">1920x1080, 23,976 i/s, Progressive</div>
<div class="t" style="left:528.8px;top:233.30px;font-size:6.60px;color:#d0d0d0;transform:scaleY(1.1);">VBR, 2 passages, &nbsp;Cible 4.50 Mbps, Max. 5.40 Mbps</div>
<div class="t" style="left:528.8px;top:241.47px;font-size:6.65px;color:#d0d0d0;transform:scaleY(1.1);">AAC, 160 &nbsp;Kbits/s, 48 &nbsp;kHz, Stéréo</div>
<div class="t" style="left:528.8px;top:253.74px;font-size:6.32px;color:#d0d0d0;transform:scaleY(1.1);">Séquence, Séquence 01</div>
<div class="t" style="left:528.8px;top:261.85px;font-size:6.70px;color:#d0d0d0;transform:scaleY(1.1);">1280x1080 (1,5), 29,97 &nbsp;i/s, Supérieur, 00;01;50;09</div>
<div class="t" style="left:528.8px;top:269.97px;font-size:6.45px;color:#d0d0d0;transform:scaleY(1.1);">48000 Hz, Stéréo</div>
<div class="t" style="left:473.5px;top:296.31px;font-size:6.98px;color:#747474;transform:scaleY(1.1);">Filtres</div>
<div class="t" style="left:508.3px;top:296.22px;font-size:7.17px;color:#ececec;transform:scaleY(1.1);">Vidéo</div>
<div class="t" style="left:543px;top:296.42px;font-size:6.76px;color:#747474;transform:scaleY(1.1);">Audio</div>
<div class="t" style="left:576px;top:296.32px;font-size:6.96px;color:#747474;transform:scaleY(1.1);">Multiplexeur</div>
<div class="t" style="left:630.5px;top:296.89px;font-size:5.82px;color:#747474;transform:scaleY(1.1);">FTP</div>
<div class="t" style="left:489.7px;top:317.87px;font-size:6.86px;color:#e6e6e6;font-weight:bold;transform:scaleY(1.1);">Réglages vidéo de base</div>
<div class="t" style="left:554.2px;top:333.98px;font-size:6.64px;color:#d2d2d2;transform:scaleY(1.1);">Largeur :</div>
<div class="t" style="left:553.7px;top:349.81px;font-size:6.59px;color:#d2d2d2;transform:scaleY(1.1);">Hauteur :</div>
<div class="t" style="left:589.2px;top:334.04px;font-size:6.51px;color:#d39c1c;transform:scaleY(1.1);text-decoration:underline dotted #b98a1c;text-decoration-thickness:0.7px;text-underline-offset:1.1px;">1 920</div>
<div class="t" style="left:589.2px;top:349.84px;font-size:6.51px;color:#d39c1c;transform:scaleY(1.1);text-decoration:underline dotted #b98a1c;text-decoration-thickness:0.7px;text-underline-offset:1.1px;">1 080</div>
<div class="t" style="left:511.7px;top:372.60px;font-size:6.60px;color:#d2d2d2;transform:scaleY(1.1);">Fréquence d'images :</div>
<div class="t" style="left:586.2px;top:373.15px;font-size:6.70px;color:#d4d4d4;transform:scaleY(1.1);">23,976</div>
<div class="t" style="left:485px;top:387.86px;font-size:6.87px;color:#d2d2d2;transform:scaleY(1.1);">Utiliser la qualité de rendu maximale</div>
<div class="t" style="left:612.3px;top:387.76px;font-size:7.08px;color:#d2d2d2;transform:scaleY(1.1);">Utiliser les prévisualisations</div>
<div class="t" style="left:485px;top:401.97px;font-size:7.07px;color:#d2d2d2;transform:scaleY(1.1);">Utiliser l'interpolation d'images</div>
<div class="t" style="left:475.3px;top:416.71px;font-size:6.78px;color:#d2d2d2;transform:scaleY(1.1);">Taille de fichier estimée : &nbsp;61 Mo</div>
<div class="t" style="left:478.7px;top:433.84px;font-size:6.53px;color:#dadada;transform:scaleY(1.1);">Métadonnées...</div>
<div class="t" style="left:541px;top:433.74px;font-size:6.73px;color:#dadada;transform:scaleY(1.1);">File d'attente</div>
<div class="t" style="left:607.5px;top:433.86px;font-size:6.48px;color:#dadada;transform:scaleY(1.1);">Exporter</div>
<div class="t" style="left:667.7px;top:433.68px;font-size:6.85px;color:#dadada;transform:scaleY(1.1);">Annuler</div>
<!--DLG_END-->
</div>

<!-- caption -->
<div class="a" style="left:0;top:510px;width:900px;height:126px;filter:blur(0.3px);">
<div class="cap" style="top:18.3px;letter-spacing:0.24px;">Pour exporter :</div>
<div class="cap" style="top:33.5px;">Fichier &gt; Exporter &gt; Média &gt; Format H.264 (après plusieurs tests, il s’est avéré avoir la meilleur qualité de rendu) &gt; Tablette Android</div>
<div class="cap" style="top:48.7px;letter-spacing:0.1px;">Ceci fournit un fichier au format MP4!</div>
<div class="cap" style="top:63.9px;">Et après...c’est super long, ne prévoyez pas d’éteindre votre ordinateur avant un petit moment suivant la taille de votre video! (Pour ma part,</div>
<div class="cap" style="top:79.1px;">entre 1h30 et 3 heures d’exportation!)</div>
</div>

</body>
</html>
